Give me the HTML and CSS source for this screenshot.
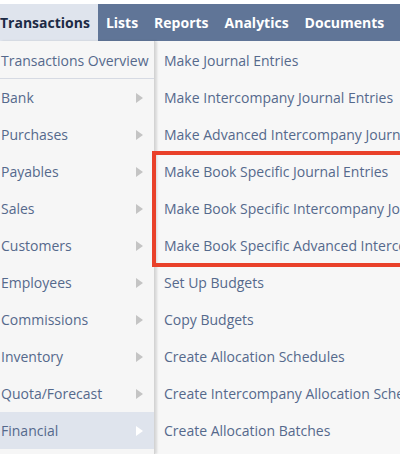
FILE: index.html
```html
<!DOCTYPE html>
<html lang="en">
<head>
  <meta charset="UTF-8" />
  <title>Transactions Menu</title>
  <link rel="stylesheet" href="styles.css">
</head>
<body>
  <nav class="topnav">
    <span class="tab active">Transactions</span>
    <span class="tab">Lists</span>
    <span class="tab">Reports</span>
    <span class="tab">Analytics</span>
    <span class="tab">Documents</span>
  </nav>

  <div class="menus">
    <ul class="menu-main">
      <li class="overview">Transactions Overview</li>
      <li>Bank <span class="arrow"></span></li>
      <li>Purchases <span class="arrow"></span></li>
      <li>Payables <span class="arrow"></span></li>
      <li>Sales <span class="arrow"></span></li>
      <li>Customers <span class="arrow"></span></li>
      <li>Employees <span class="arrow"></span></li>
      <li>Commissions <span class="arrow"></span></li>
      <li>Inventory <span class="arrow"></span></li>
      <li>Quota/Forecast <span class="arrow"></span></li>
      <li class="current">Financial <span class="arrow"></span></li>
    </ul>

    <div class="menu-sub">
      <ul>
        <li>Make Journal Entries</li>
        <li>Make Intercompany Journal Entries</li>
        <li>Make Advanced Intercompany Journal Entries</li>
        <li>Make Book Specific Journal Entries</li>
        <li>Make Book Specific Intercompany Journal Entries</li>
        <li>Make Book Specific Advanced Intercompany Journal Entries</li>
        <li>Set Up Budgets</li>
        <li>Copy Budgets</li>
        <li>Create Allocation Schedules</li>
        <li>Create Intercompany Allocation Schedules</li>
        <li>Create Allocation Batches</li>
      </ul>
      <div class="callout"></div>
    </div>
  </div>
</body>
</html>
```

FILE: styles.css
```css
* { box-sizing: border-box; }
body {
  margin: 0;
  padding-top: 4px;
  background: #fff;
  font-family: 'Open Sans', 'Liberation Sans', sans-serif;
  font-size: 14px;
  overflow: hidden;
}

/* Top nav */
.topnav {
  display: flex;
  height: 37px;
  background-color: #607597;
  white-space: nowrap;
}
.tab {
  display: flex;
  align-items: center;
  padding: 0 8px;
  color: #fff;
  font-weight: bold;
}
.tab.active {
  padding-left: 0;
  background-color: #dfe4ed;
  color: #1c2a45;
}

/* Menus */
.menus {
  display: grid;
  grid-template-columns: 155px 1fr;
  background-color: #f6f6f6;
  height: 413px;
}
ul { list-style: none; margin: 0; padding: 1px 0 0; }
li {
  height: 37px;
  display: flex;
  align-items: center;
  color: #55698c;
  white-space: nowrap;
}

.menu-main {
  border-right: 1px solid #d3d3d3;
  box-shadow: 2px 0 2px rgba(0,0,0,0.12);
  position: relative;
  z-index: 1;
}
.menu-main li {
  justify-content: space-between;
  padding: 0 11px 0 1px;
}
.menu-main li.overview { border-bottom: 1px solid #d6dae3; }
.menu-main li.current { background-color: #dfe4ed; }

.arrow {
  width: 0;
  height: 0;
  border-top: 5px solid transparent;
  border-bottom: 5px solid transparent;
  border-left: 7px solid #c4c4c4;
}
.current .arrow { border-left-color: #fff; }

.menu-sub {
  position: relative;
  background-color: #f7f7f7;
}
.menu-sub li { padding-left: 9px; }

/* annotation box */
.callout {
  position: absolute;
  top: 110px;
  left: -3px;
  right: -10px;
  height: 116px;
  border: 4px solid #e9412a;
  z-index: 2;
}
```
